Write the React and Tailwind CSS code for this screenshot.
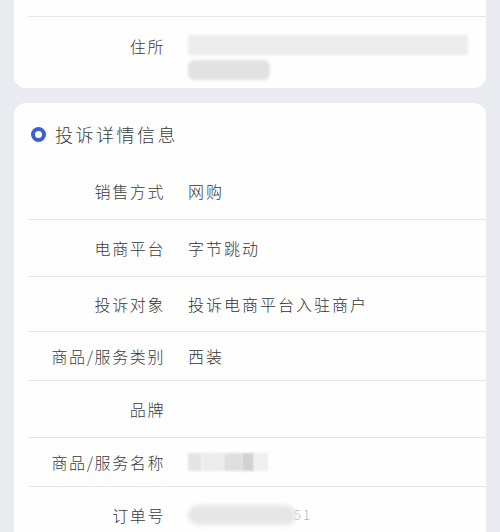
import React from "react";

const font = { fontFamily: '"Noto Sans CJK SC", "Noto Sans", sans-serif' };

const rows = [
  { label: "销售方式", value: "网购", h: "h-[58px]" },
  { label: "电商平台", value: "字节跳动", h: "h-[57px]" },
  { label: "投诉对象", value: "投诉电商平台入驻商户", h: "h-[55px]" },
  { label: "商品/服务类别", value: "西装", h: "h-[49px]" },
  { label: "品牌", value: "", h: "h-[57px]" },
  { label: "商品/服务名称", blur: "name", h: "h-[49px]" },
  { label: "订单号", blur: "order", h: "h-[56px]" },
];

const Blurred = ({ kind }) => {
  if (kind === "name") {
    return (
      <div className="flex items-center gap-0 h-[20px]">
        <div className="w-[14px] h-[18px] bg-[#e4e4e4] blur-[1px]" />
        <div className="w-[22px] h-[18px] bg-[#ececec] blur-[1px]" />
        <div className="w-[18px] h-[18px] bg-[#dedede] blur-[1px]" />
        <div className="w-[12px] h-[18px] bg-[#d2d2d2] blur-[1px]" />
        <div className="w-[14px] h-[18px] bg-[#efefef] blur-[1px]" />
      </div>
    );
  }
  return (
    <div className="flex items-center">
      <div className="w-[108px] h-[20px] rounded-full bg-[#e6e6e6] blur-[2px]" />
      <span className="text-[13px] text-[#b8b8b8] -ml-[2px]">51</span>
    </div>
  );
};

const Row = ({ row, last }) => (
  <div className={`flex items-center ${row.h} ${last ? "" : "border-b border-[#e6e6e8]"}`}>
    <div className="w-[137px] shrink-0 text-right text-[16px] tracking-[1.6px] text-[#3a3a3a] font-light">
      {row.label}
    </div>
    <div className="pl-[23px] text-[16px] tracking-[2px] text-[#333] font-light">
      {row.blur ? <Blurred kind={row.blur} /> : row.value}
    </div>
  </div>
);

export default function App() {
  return (
    <div className="w-[500px] h-[532px] overflow-hidden bg-[#e9ebf1]" style={font}>
      <div className="mx-[14px] bg-[#fefefe] rounded-b-[12px]">
        <div className="h-[17px] ml-[14px] border-b border-[#e6e6e8]" />
        <div className="flex ml-[14px] pt-[17px] h-[71px]">
          <div className="w-[137px] shrink-0 text-right text-[16px] tracking-[1.6px] text-[#3a3a3a] font-light leading-[24px]">
            住所
          </div>
          <div className="pl-[23px] flex flex-col gap-[4px] pr-[14px]">
            <div className="flex h-[22px] items-center">
              <div className="w-[280px] h-[20px] bg-[#ececec] blur-[1.5px]" />
            </div>
            <div className="w-[82px] h-[20px] rounded-[6px] bg-[#e2e2e2] blur-[1.5px]" />
          </div>
        </div>
      </div>

      <div className="mx-[14px] mt-[15px] bg-[#fefefe] rounded-[12px] pl-[14px]">
        <div className="flex items-center gap-[9px] pt-[21px] pb-[18px]">
          <div className="w-[15px] h-[15px] rounded-full border-[4px] border-[#3b60c9] ml-[3px]" />
          <div className="text-[18px] tracking-[2.5px] text-[#3a3a3a] font-light leading-[20px]">
            投诉详情信息
          </div>
        </div>
        {rows.map((r, i) => (
          <Row key={r.label} row={r} last={i === rows.length - 1} />
        ))}
      </div>
    </div>
  );
}
